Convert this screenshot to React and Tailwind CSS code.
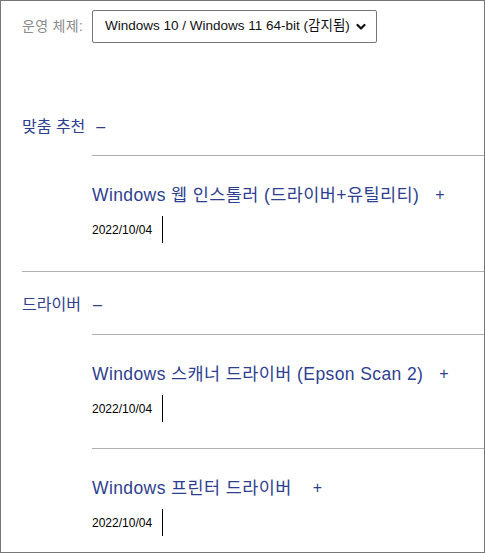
import React from "react";

const Chevron = () => (
  <svg width="10" height="8" viewBox="0 0 10 8" className="ml-[6px] shrink-0">
    <path d="M1.5 2 L5 5.5 L8.5 2" fill="none" stroke="#111" strokeWidth="2.2" strokeLinecap="round" strokeLinejoin="round" />
  </svg>
);

function Item({ title, plusGap }) {
  return (
    <div className="ml-[91px] border-t border-[#b0b0b0] pt-[29px]">
      <div className="flex items-center h-[20px] text-[17.5px] tracking-[0.4px] leading-[20px] text-[#2f3f8f] whitespace-nowrap">
        <span>{title}</span>
        <span className={plusGap + " text-[16px] text-[#2f3f8f]"}>+</span>
      </div>
      <div className="mt-[11px] flex items-center h-[27px]">
        <span className="text-[12px] text-black w-[70px]">2022/10/04</span>
        <span className="w-[1px] h-[27px] bg-black"></span>
      </div>
    </div>
  );
}

function Heading({ text, dashMl }) {
  return (
    <div className="flex items-center h-[20px] pl-[21px] text-[16px] leading-[20px] text-[#2f3f8f]">
      <span>{text}</span>
      <span className={dashMl}>–</span>
    </div>
  );
}

export default function App() {
  return (
    <div className="w-[485px] h-[553px] box-border border border-[#777] bg-white overflow-hidden font-['Liberation_Sans','Noto_Sans_CJK_KR',sans-serif]">
      <div className="flex items-center pl-[21px] pt-[9px]">
        <span className="text-[14px] tracking-[0.3px] text-[#8a8a8a] w-[70px] whitespace-nowrap">운영 체제:</span>
        <div className="flex items-center w-[285px] h-[33px] border border-[#767676] rounded-[2px] pl-[12px] text-[13.5px] text-[#111] whitespace-nowrap overflow-hidden">
          <span>Windows 10 / Windows 11 64-bit (감지됨)</span>
          <Chevron />
        </div>
      </div>

      <div className="mt-[74px]">
        <Heading text="맞춤 추천" dashMl="ml-[11px]" />
      </div>
      <div className="mt-[18px]">
        <Item title="Windows 웹 인스톨러 (드라이버+유틸리티)" plusGap="ml-[16px]" />
      </div>

      <div className="mt-[28px] ml-[21px] border-t border-[#b0b0b0] pt-[23px]">
        <div className="-ml-[21px]">
          <Heading text="드라이버" dashMl="ml-[12px]" />
        </div>
      </div>
      <div className="mt-[19px]">
        <Item title="Windows 스캐너 드라이버 (Epson Scan 2)" plusGap="ml-[16px]" />
      </div>
      <div className="mt-[26px]">
        <Item title="Windows 프린터 드라이버" plusGap="ml-[21px]" />
      </div>
    </div>
  );
}
